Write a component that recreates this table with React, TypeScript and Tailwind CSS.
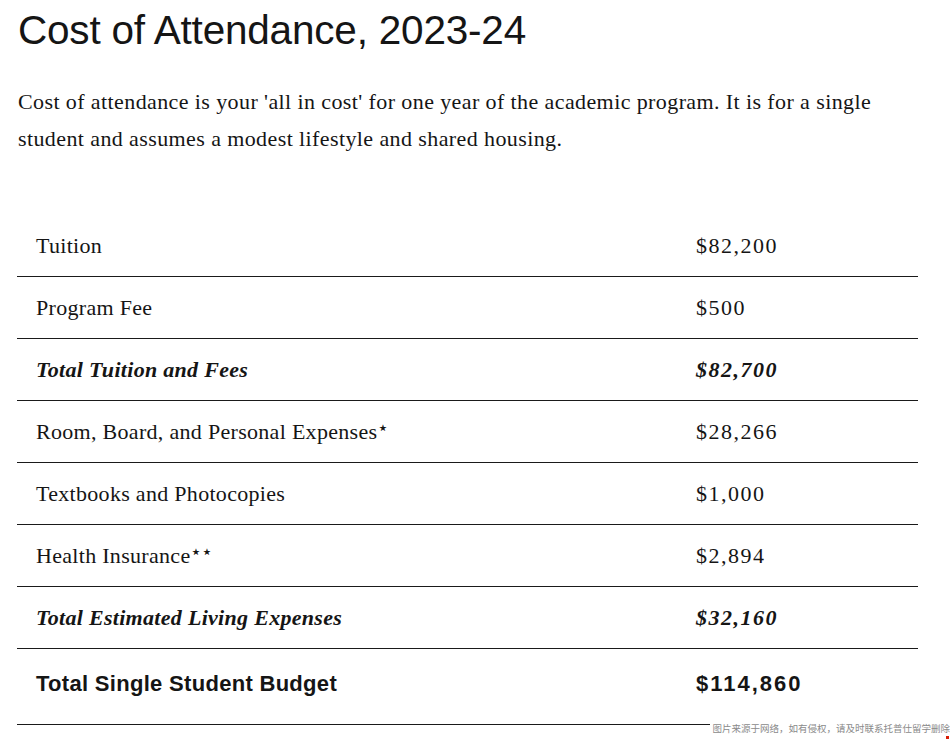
const rows: { label: string; amount: string; kind: "plain" | "sub" | "total" }[] = [
  { label: "Tuition", amount: "$82,200", kind: "plain" },
  { label: "Program Fee", amount: "$500", kind: "plain" },
  { label: "Total Tuition and Fees", amount: "$82,700", kind: "sub" },
  { label: "Room, Board, and Personal Expenses*", amount: "$28,266", kind: "plain" },
  { label: "Textbooks and Photocopies", amount: "$1,000", kind: "plain" },
  { label: "Health Insurance**", amount: "$2,894", kind: "plain" },
  { label: "Total Estimated Living Expenses", amount: "$32,160", kind: "sub" },
  { label: "Total Single Student Budget", amount: "$114,860", kind: "total" },
];

function Label({ text }: { text: string }) {
  // footnote stars sit raised and small
  const m = text.match(/^(.*?)(\*+)$/);
  if (!m) return <>{text}</>;
  return (
    <>
      {m[1]}
      <span className="relative -top-[5px] text-[19px] tracking-[-1px]">{"⋆".repeat(m[2].length)}</span>
    </>
  );
}

export default function App() {
  return (
    <div className="relative h-[739px] w-[950px] overflow-hidden bg-white text-[#151515]">
      <div className="pl-[18px] pr-[32px] pt-[6px]">
        <h1 className="font-['Liberation_Sans',Arial,sans-serif] text-[40.5px] font-light leading-[48px] tracking-[-0.2px]">
          Cost of Attendance, 2023-24
        </h1>

        <p className="mt-[29px] font-['Liberation_Serif','Times_New_Roman',serif] text-[22px] leading-[37px] tracking-[0.4px]">
          Cost of attendance is your 'all in cost' for one year of the academic program. It is for a single student
          and assumes a modest lifestyle and shared housing.
        </p>
      </div>

      <div className="ml-[17px] mt-[58px] w-[901px]">
        {rows.map((r) => {
          const font =
            r.kind === "total"
              ? "font-['Liberation_Sans',Arial,sans-serif] font-bold text-[22px]"
              : r.kind === "sub"
                ? "font-['Liberation_Serif',serif] font-bold italic text-[22px]"
                : "font-['Liberation_Serif',serif] text-[22px]";
          return (
            <div
              key={r.label}
              className={`grid grid-cols-[660px_1fr] items-center border-b-[1.5px] border-[#1a1a1a] ${
                r.kind === "total" ? "h-[76px] pb-[6px]" : "h-[62px]"
              } ${font}`}
            >
              <div className="pl-[19px] tracking-[0.3px]">
                <Label text={r.label} />
              </div>
              <div className={`pl-[19px] ${r.kind === "total" ? "tracking-[2px]" : "tracking-[1.5px]"}`}>
                {r.amount}
              </div>
            </div>
          );
        })}
      </div>

      <div className="absolute right-0 top-[722px] whitespace-nowrap bg-white pl-[2px] font-['Noto_Sans_CJK_SC',sans-serif] text-[9.5px] leading-[12px] text-[#8a8a8a]">
        图片来源于网络，如有侵权，请及时联系托普仕留学删除
      </div>
      <div className="absolute bottom-0 right-[1px] h-[3px] w-[3px] bg-[#d81e06]" />
    </div>
  );
}
